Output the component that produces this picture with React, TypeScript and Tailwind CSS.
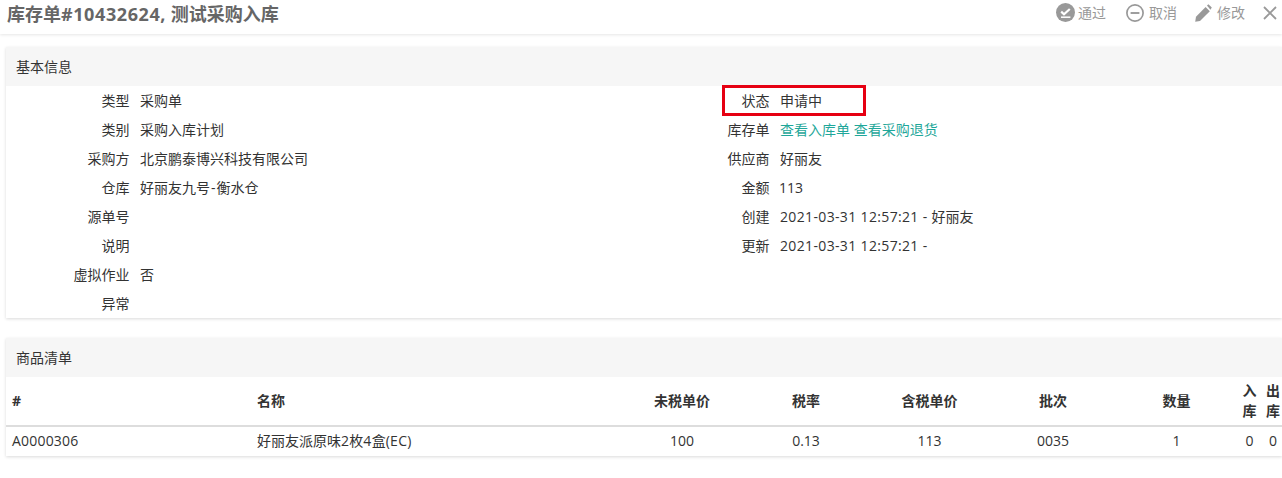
import React from "react";

const font = { fontFamily: '"Open Sans","Noto Sans CJK SC",sans-serif' };

function Row({ label, children }: { label: string; children?: React.ReactNode }) {
  return (
    <div className="flex h-[29px] items-center">
      <div className="w-[123.5px] text-right">{label}</div>
      <div className="ml-[10.5px] whitespace-nowrap">{children}</div>
    </div>
  );
}

function ActionIcon({ kind }: { kind: "ok" | "minus" | "pen" }) {
  if (kind === "ok")
    return (
      <svg width="19" height="19" viewBox="0 0 19 19">
        <circle cx="9.5" cy="9.5" r="9.5" fill="#999" />
        <path d="M5.2 8.6l2.8 2.6 5.8-5.2" fill="none" stroke="#fff" strokeWidth="2.2" />
        <path d="M5 14.2h9.4" stroke="#fff" strokeWidth="1.5" />
      </svg>
    );
  if (kind === "minus")
    return (
      <svg width="18" height="18" viewBox="0 0 18 18">
        <circle cx="9" cy="9" r="8.1" fill="none" stroke="#999" strokeWidth="1.7" />
        <path d="M4.6 9h8.8" stroke="#999" strokeWidth="1.9" />
      </svg>
    );
  return (
    <svg width="17" height="18" viewBox="0 0 17 18">
      <path d="M0.2 17.8l0.8-5L10.6 3l4.2 4.2L5 17z" fill="#999" />
      <path d="M12 1.6L13.4 0.2l3.4 3.4-1.4 2.2z" fill="#999" />
    </svg>
  );
}

const th = "h-[50px] border-b-2 border-[#ddd] font-bold text-[#333] p-0 align-middle";
const thUp = "h-[50px] border-b-2 border-[#ddd] font-bold text-[#333] px-0 pt-0 pb-[2px] align-middle";
const td = "h-[29px] px-0 pt-0 pb-[2px] align-middle";

export default function App() {
  return (
    <div style={font} className="relative h-[478px] w-[1282px] overflow-hidden bg-white text-[14px] text-[#333]">
      <header className="flex h-[34px] items-center justify-between pl-[7px] pr-[5px] shadow-[0_1px_3px_rgba(0,0,0,0.1)]">
        <h1 className="-mt-[6px] text-[18px] font-bold text-[#666]">
          库存单<span className="tracking-[0.6px]">#10432624,</span> 测试采购入库
        </h1>
        <div className="-mt-[9px] flex items-center text-[14px] text-[#999]">
          <span className="flex items-center gap-[3px]"><ActionIcon kind="ok" />通过</span>
          <span className="ml-[20px] flex items-center gap-[5px]"><ActionIcon kind="minus" />取消</span>
          <span className="ml-[18px] flex items-center gap-[5px]"><ActionIcon kind="pen" />修改</span>
          <svg className="ml-[18px]" width="14" height="14" viewBox="0 0 14 14">
            <path d="M1 1l12 12M13 1L1 13" stroke="#999" strokeWidth="1.8" />
          </svg>
        </div>
      </header>

      <section className="ml-[6px] mt-[13px] h-[271px] shadow-[0_1px_3px_rgba(0,0,0,0.15)]">
        <div className="flex h-[39px] items-center bg-[#f6f6f6] pl-[10px]">基本信息</div>
        <div className="flex">
          <div className="w-[640px]">
            <Row label="类型">采购单</Row>
            <Row label="类别">采购入库计划</Row>
            <Row label="采购方">北京鹏泰博兴科技有限公司</Row>
            <Row label="仓库">好丽友九号<span className="px-[1px]">-</span>衡水仓</Row>
            <Row label="源单号" />
            <Row label="说明" />
            <Row label="虚拟作业">否</Row>
            <Row label="异常" />
          </div>
          <div>
            <Row label="状态">申请中</Row>
            <Row label="库存单">
              <span className="text-[#1fa79a]">查看入库单</span>{" "}
              <span className="text-[#1fa79a]">查看采购退货</span>
            </Row>
            <Row label="供应商">好丽友</Row>
            <Row label="金额"><span className="-ml-[1px]">113</span></Row>
            <Row label="创建"><span className="tracking-[0.35px]">2021-03-31 12:57:21 - </span>好丽友</Row>
            <Row label="更新"><span className="tracking-[0.35px]">2021-03-31 12:57:21 -</span></Row>
          </div>
        </div>
      </section>

      <section className="ml-[6px] mt-[20px] h-[118px] shadow-[0_1px_3px_rgba(0,0,0,0.15)]">
        <div className="flex h-[39px] items-center bg-[#f6f6f6] pl-[10px]">商品清单</div>
        <table className="w-[1279px] table-fixed border-separate border-spacing-0">
          <colgroup>
            <col className="w-[251px]" />
            <col className="w-[363px]" />
            <col className="w-[124px]" />
            <col className="w-[124px]" />
            <col className="w-[123px]" />
            <col className="w-[124px]" />
            <col className="w-[123px]" />
            <col className="w-[23px]" />
            <col className="w-[24px]" />
          </colgroup>
          <thead>
            <tr>
              <th className={thUp + " pl-[6px] text-left"}>#</th>
              <th className={thUp + " text-left"}>名称</th>
              <th className={thUp + " text-center"}>未税单价</th>
              <th className={thUp + " text-center"}>税率</th>
              <th className={thUp + " text-center"}>含税单价</th>
              <th className={thUp + " text-center"}>批次</th>
              <th className={thUp + " text-center"}>数量</th>
              <th className={th + " px-[4px] text-center leading-[20px]"}>入库</th>
              <th className={th + " px-[4px] text-center leading-[20px]"}>出库</th>
            </tr>
          </thead>
          <tbody>
            <tr>
              <td className={td + " pl-[6px] tracking-[0.2px]"}>A0000306</td>
              <td className={td}>好丽友派原味<span className="tracking-[0.3px]">2</span>枚<span className="tracking-[0.3px]">4</span>盒<span className="tracking-[0.3px]">(EC)</span></td>
              <td className={td + " text-center"}>100</td>
              <td className={td + " text-center"}>0.13</td>
              <td className={td + " text-center"}>113</td>
              <td className={td + " text-center"}>0035</td>
              <td className={td + " text-center"}>1</td>
              <td className={td + " text-center"}>0</td>
              <td className={td + " text-center"}>0</td>
            </tr>
          </tbody>
        </table>
      </section>

      <div className="absolute left-[722px] top-[85px] h-[31px] w-[144px] border-[3px] border-[#e60012]" />
    </div>
  );
}
